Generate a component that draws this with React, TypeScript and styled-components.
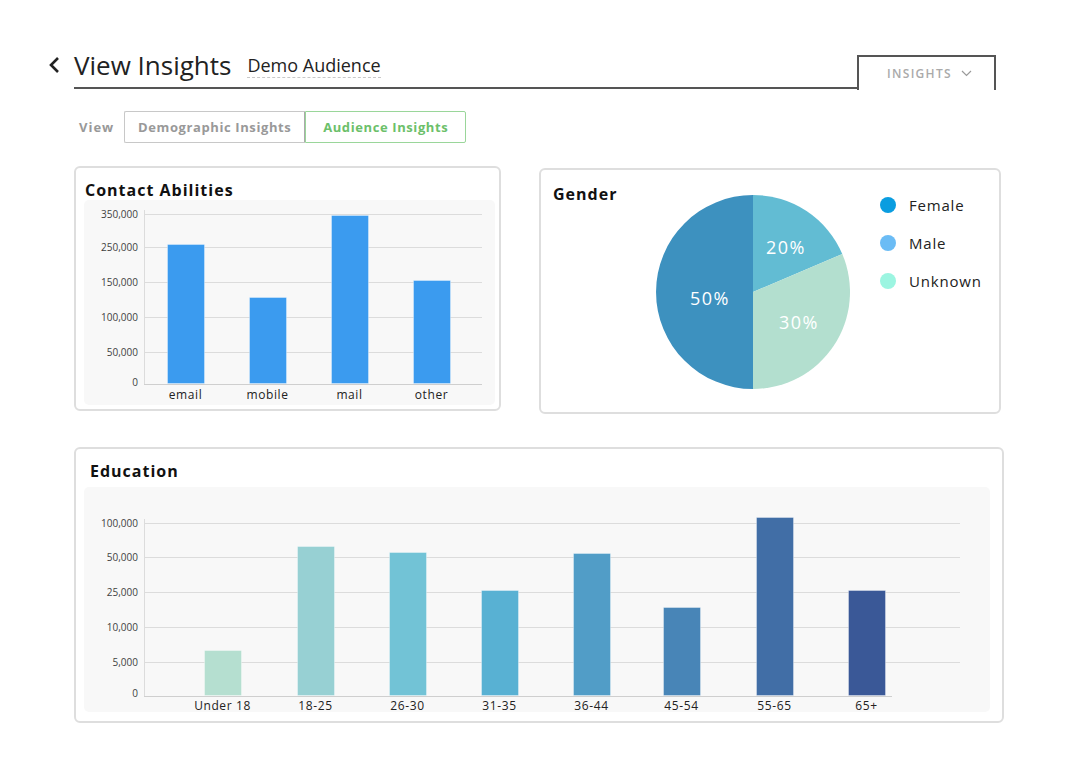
import styled, { createGlobalStyle } from "styled-components";

const GlobalStyle = createGlobalStyle`
  html, body {
    margin: 0;
    padding: 0;
    background: #ffffff;
  }
  body {
    font-family: "Open Sans", "Liberation Sans", sans-serif;
    color: #222;
  }
`;

type Bar = { label: string; x: number; top: number; color: string };

const contactTicks = [
  { label: "350,000", y: 14 },
  { label: "250,000", y: 47 },
  { label: "150,000", y: 82 },
  { label: "100,000", y: 117 },
  { label: "50,000", y: 152 },
  { label: "0", y: 182 },
];

const contactBars: Bar[] = [
  { label: "email", x: 83, top: 44, color: "#3b9bef" },
  { label: "mobile", x: 165, top: 97, color: "#3b9bef" },
  { label: "mail", x: 247, top: 15, color: "#3b9bef" },
  { label: "other", x: 329, top: 80, color: "#3b9bef" },
];

const educationTicks = [
  { label: "100,000", y: 36 },
  { label: "50,000", y: 70 },
  { label: "25,000", y: 105 },
  { label: "10,000", y: 140 },
  { label: "5,000", y: 175 },
  { label: "0", y: 206 },
];

const educationBars: Bar[] = [
  { label: "Under 18", x: 120, top: 163, color: "#b5dfd0" },
  { label: "18-25", x: 213, top: 59, color: "#97d0d3" },
  { label: "26-30", x: 305, top: 65, color: "#72c3d6" },
  { label: "31-35", x: 397, top: 103, color: "#58b1d3" },
  { label: "36-44", x: 489, top: 66, color: "#519dc7" },
  { label: "45-54", x: 579, top: 120, color: "#4885b7" },
  { label: "55-65", x: 672, top: 30, color: "#416ea6" },
  { label: "65+", x: 764, top: 103, color: "#3a5897" },
];

const legend = [
  { label: "Female", color: "#0a9de0" },
  { label: "Male", color: "#6bbcf5" },
  { label: "Unknown", color: "#9cf5e1" },
];

function BarChart({
  width,
  height,
  ticks,
  bars,
  base,
  gridEnd,
  axisEnd,
  labelY,
}: {
  width: number;
  height: number;
  ticks: { label: string; y: number }[];
  bars: Bar[];
  base: number;
  gridEnd: number;
  axisEnd: number;
  labelY: number;
}) {
  return (
    <svg width={width} height={height} viewBox={`0 0 ${width} ${height}`}>
      {ticks.slice(0, -1).map((t) => (
        <line key={t.label} x1={60} x2={gridEnd} y1={t.y + 0.5} y2={t.y + 0.5} stroke="#dcdcdc" strokeWidth={1} />
      ))}
      <line x1={60.5} x2={60.5} y1={ticks[0].y - 4} y2={base} stroke="#dcdcdc" strokeWidth={1} />
      {ticks.map((t) => (
        <text
          key={t.label}
          x={54}
          y={t.y}
          textAnchor="end"
          dominantBaseline="central"
          fontSize={10}
          fill="#3f3f3f"
          fontFamily="Open Sans, sans-serif"
        >
          {t.label}
        </text>
      ))}
      {bars.map((b) => (
        <rect
          key={b.label}
          x={b.x + 0.5}
          y={b.top + 0.5}
          width={37}
          height={base - b.top - 1}
          fill={b.color}
          stroke="rgba(255,255,255,0.35)"
          strokeWidth={1}
        />
      ))}
      <line x1={60} x2={axisEnd} y1={base + 0.5} y2={base + 0.5} stroke="#cfcfcf" strokeWidth={1} />
      {bars.map((b) => (
        <text
          key={b.label}
          x={b.x + 18.5}
          y={labelY}
          textAnchor="middle"
          dominantBaseline="central"
          fontSize={12}
          letterSpacing={0.6}
          fill="#222"
          fontFamily="Open Sans, sans-serif"
        >
          {b.label}
        </text>
      ))}
    </svg>
  );
}

function PieChart() {
  const cx = 100;
  const cy = 100;
  const r = 97;
  const a = (67 * Math.PI) / 180;
  const px = cx + r * Math.sin(a);
  const py = cy - r * Math.cos(a);
  return (
    <svg width={200} height={200} viewBox="0 0 200 200">
      <path d={`M${cx},${cy} L${cx},${cy + r} A${r},${r} 0 0 1 ${cx},${cy - r} Z`} fill="#3d91bf" />
      <path d={`M${cx},${cy} L${cx},${cy - r} A${r},${r} 0 0 1 ${px},${py} Z`} fill="#62bcd3" />
      <path d={`M${cx},${cy} L${px},${py} A${r},${r} 0 0 1 ${cx},${cy + r} Z`} fill="#b3dfcf" />
      <PieLabel x={133} y={55}>20%</PieLabel>
      <PieLabel x={57} y={106}>50%</PieLabel>
      <PieLabel x={146} y={130}>30%</PieLabel>
    </svg>
  );
}

export default function App() {
  return (
    <>
      <GlobalStyle />
      <Page>
        <Header>
          <BackButton>
            <svg width="14" height="18" viewBox="0 0 14 18">
              <polyline points="10,2 3,9 10,16" fill="none" stroke="#222" strokeWidth="2.6" />
            </svg>
          </BackButton>
          <TitleBar>
            <Title>View Insights</Title>
            <AudienceName>Demo Audience</AudienceName>
          </TitleBar>
          <Tab>
            INSIGHTS
            <svg width="11" height="7" viewBox="0 0 11 7">
              <polyline points="1,1 5.5,5.5 10,1" fill="none" stroke="#9a9a9a" strokeWidth="1.2" />
            </svg>
          </Tab>
        </Header>

        <Content>
          <ViewRow>
            <ViewLabel>View</ViewLabel>
            <Segments>
              <Segment $w={181}>Demographic Insights</Segment>
              <Segment $w={161} $active>
                Audience Insights
              </Segment>
            </Segments>
          </ViewRow>

          <TopRow>
            <Card $h={245} $pad="12px 4px 4px 8px">
              <CardTitle $indent={1}>Contact Abilities</CardTitle>
              <ChartArea>
                <BarChart
                  width={411}
                  height={205}
                  ticks={contactTicks}
                  bars={contactBars}
                  base={184}
                  gridEnd={398}
                  axisEnd={398}
                  labelY={194}
                />
              </ChartArea>
            </Card>

            <GenderCard>
              <CardTitle $indent={0}>Gender</CardTitle>
              <PieWrap>
                <PieChart />
              </PieWrap>
              <Legend>
                {legend.map((l) => (
                  <LegendItem key={l.label}>
                    <Dot $color={l.color} />
                    {l.label}
                  </LegendItem>
                ))}
              </Legend>
            </GenderCard>
          </TopRow>

          <EducationCard $h={276} $pad="12px 12px 9px 8px">
            <CardTitle $indent={6}>Education</CardTitle>
            <ChartArea $gap={6}>
              <BarChart
                width={906}
                height={225}
                ticks={educationTicks}
                bars={educationBars}
                base={209}
                gridEnd={876}
                axisEnd={808}
                labelY={218}
              />
            </ChartArea>
          </EducationCard>
        </Content>
      </Page>
    </>
  );
}

const Page = styled.div`
  padding: 48px 0 40px 48px;
  width: 958px;
`;

const Header = styled.div`
  display: flex;
  align-items: flex-end;
  width: 948px;
`;

const BackButton = styled.div`
  width: 26px;
  height: 41px;
  display: flex;
  align-items: center;
  padding-bottom: 8px;
  box-sizing: border-box;
`;

const TitleBar = styled.div`
  flex: 1;
  display: flex;
  align-items: center;
  gap: 16px;
  padding-bottom: 4px;
  border-bottom: 2px solid #555;
`;

const Title = styled.h1`
  margin: 0;
  font-size: 26px;
  line-height: 35px;
  font-weight: 500;
  color: #222;
`;

const AudienceName = styled.span`
  font-size: 18px;
  line-height: 24px;
  color: #222;
  border-bottom: 1px dashed #c8c8c8;
`;

const Tab = styled.div`
  width: 139px;
  height: 35px;
  box-sizing: border-box;
  border: 2px solid #555;
  border-bottom: none;
  margin-bottom: -1px;
  display: flex;
  align-items: center;
  justify-content: center;
  gap: 9px;
  padding-left: 6px;
  font-size: 12px;
  font-weight: 600;
  letter-spacing: 1.3px;
  color: #aaa;
`;

const Content = styled.div`
  margin-left: 26px;
  width: 930px;
`;

const ViewRow = styled.div`
  display: flex;
  align-items: center;
  gap: 10px;
  margin-top: 22px;
  padding-left: 5px;
`;

const ViewLabel = styled.span`
  font-size: 13px;
  font-weight: 700;
  letter-spacing: 1px;
  color: #999;
`;

const Segments = styled.div`
  display: flex;
`;

const Segment = styled.div<{ $w: number; $active?: boolean }>`
  width: ${(p) => p.$w}px;
  height: 32px;
  box-sizing: border-box;
  display: flex;
  align-items: center;
  justify-content: center;
  font-size: 13px;
  font-weight: 700;
  letter-spacing: 0.6px;
  color: ${(p) => (p.$active ? "#6cc06a" : "#999")};
  border: 1px solid ${(p) => (p.$active ? "#9ad69a" : "#c8c8c8")};
  border-radius: ${(p) => (p.$active ? "0 2px 2px 0" : "2px 0 0 2px")};
  ${(p) => (p.$active ? "" : "border-right-color: #aaa;")}
`;

const TopRow = styled.div`
  display: grid;
  grid-template-columns: 427px 465px;
  column-gap: 38px;
  margin-top: 23px;
  align-items: start;
`;

const Card = styled.div<{ $h: number; $pad: string }>`
  height: ${(p) => p.$h}px;
  box-sizing: border-box;
  border: 2px solid #dedede;
  border-radius: 6px;
  padding: ${(p) => p.$pad};
  display: flex;
  flex-direction: column;
  background: #fff;
`;

const EducationCard = styled(Card)`
  margin-top: 33px;
`;

const CardTitle = styled.h2<{ $indent: number }>`
  margin: 0 0 0 ${(p) => p.$indent}px;
  font-size: 16px;
  line-height: 20px;
  font-weight: 700;
  letter-spacing: 1px;
  color: #111;
  white-space: nowrap;
`;

const ChartArea = styled.div<{ $gap?: number }>`
  margin-top: ${(p) => p.$gap ?? 0}px;
  background: #f8f8f8;
  border-radius: 5px;
  display: flex;
  svg {
    display: block;
  }
`;

const GenderCard = styled.div`
  width: 462px;
  height: 246px;
  margin-top: 2px;
  box-sizing: border-box;
  border: 2px solid #dedede;
  border-radius: 6px;
  padding: 14px 12px 0 12px;
  display: flex;
  align-items: flex-start;

  ${CardTitle} {
    width: 100px;
    flex-shrink: 0;
  }
`;

const PieWrap = styled.div`
  margin-top: 8px;
  svg {
    display: block;
  }
`;

const PieLabel = styled.text.attrs({
  textAnchor: "middle",
  dominantBaseline: "central",
})`
  font-family: "Open Sans", sans-serif;
  font-size: 18px;
  letter-spacing: 1.5px;
  fill: #fff;
`;

const Legend = styled.div`
  display: flex;
  flex-direction: column;
  gap: 16px;
  margin-left: 27px;
  margin-top: 10px;
`;

const LegendItem = styled.div`
  display: flex;
  align-items: center;
  gap: 13px;
  height: 22px;
  font-size: 15px;
  letter-spacing: 0.8px;
  color: #222;
`;

const Dot = styled.span<{ $color: string }>`
  width: 16px;
  height: 16px;
  border-radius: 50%;
  background: ${(p) => p.$color};
`;
